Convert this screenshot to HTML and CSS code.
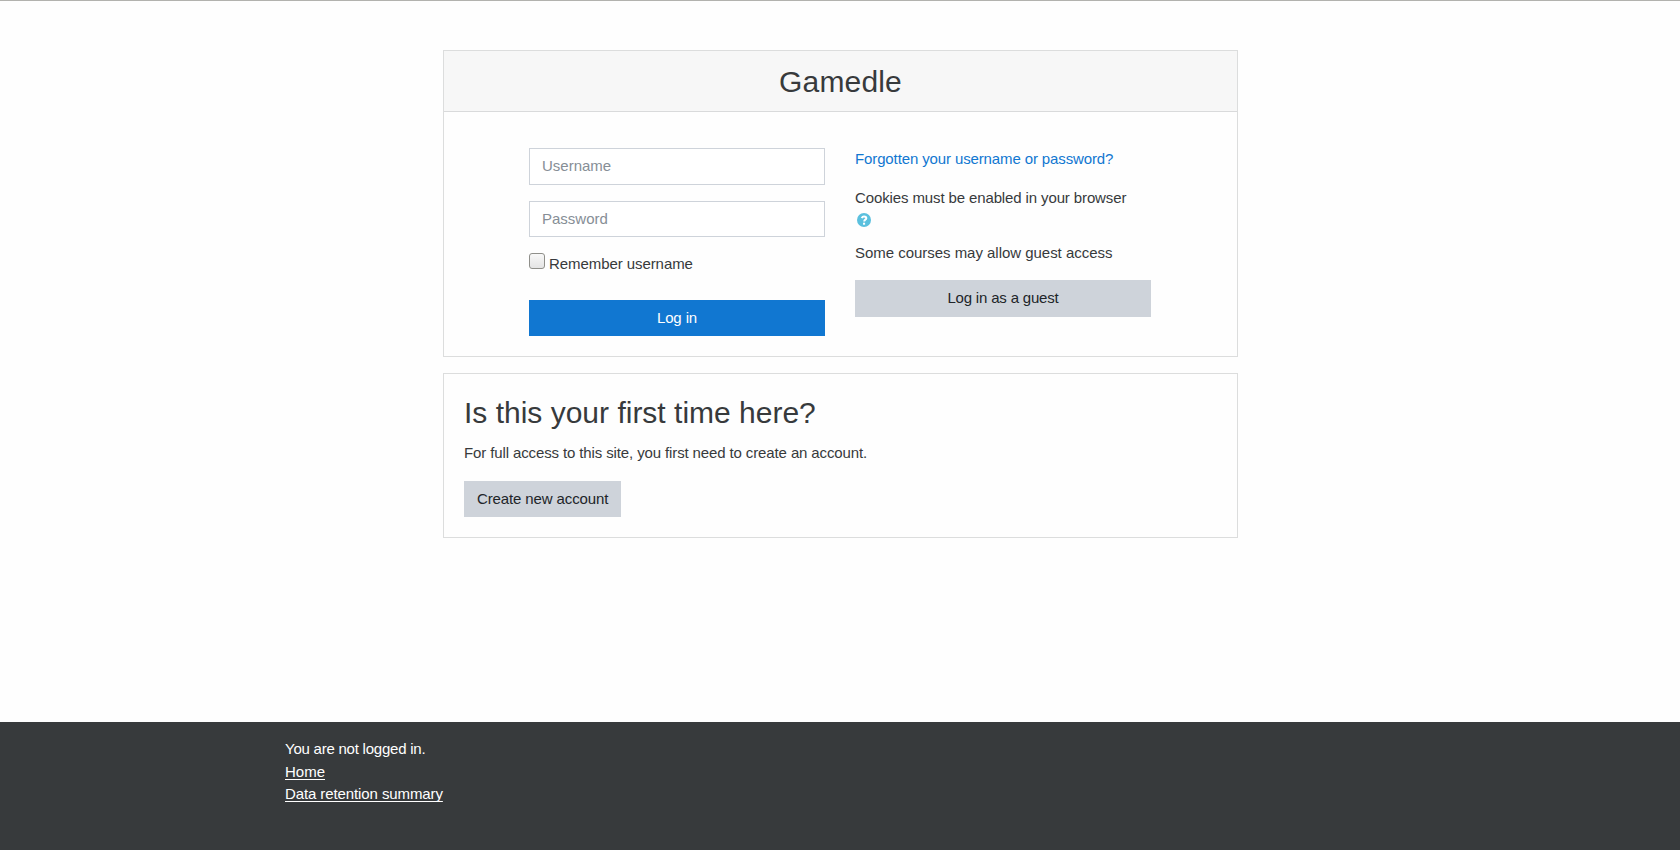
FILE: index.html
```html
<!DOCTYPE html>
<html lang="en">
<head>
<meta charset="utf-8">
<title>Gamedle: Log in to the site</title>
<link rel="stylesheet" href="styles.css">
</head>
<body>
<main class="page">
  <section class="card">
    <h2 class="card-header">Gamedle</h2>
    <div class="login">
      <form class="column">
        <input class="field username" type="text" placeholder="Username">
        <input class="field" type="password" placeholder="Password">
        <label class="remember"><input class="check" type="checkbox"><span>Remember username</span></label>
        <button class="btn primary" type="button">Log in</button>
      </form>
      <div class="column">
        <a class="forgot" href="#">Forgotten your username or password?</a>
        <div class="cookies">Cookies must be enabled in your browser
          <a class="help" href="#" aria-label="Help with cookies"><svg viewBox="0 0 14 14" width="14" height="14"><circle cx="7" cy="7" r="7" fill="#5bc0de"/><path d="M4.700 5.100C5.200 4.100 6 3.600 7 3.600c1.300 0 2.300.7 2.300 1.700 0 1.500-2.100 1.300-2.100 3.100" fill="none" stroke="#fff" stroke-width="2"/><path d="M6 9.700h2.100v2H6z" fill="#fff"/></svg></a>
        </div>
        <p class="guest-note">Some courses may allow guest access</p>
        <button class="btn secondary guest" type="button">Log in as a guest</button>
      </div>
    </div>
  </section>
  <section class="card signup">
    <h2 class="signup-title">Is this your first time here?</h2>
    <p class="signup-text">For full access to this site, you first need to create an account.</p>
    <button class="btn secondary" type="button">Create new account</button>
  </section>
</main>
<footer class="footer">
  <div class="footer-inner">
    <div class="status">You are not logged in.</div>
    <div><a href="#">Home</a></div>
    <div><a class="retention" href="#">Data retention summary</a></div>
  </div>
</footer>
</body>
</html>
```
FILE: styles.css
```css
* { box-sizing: border-box; }

body {
  margin: 0;
  height: 850px;
  overflow: hidden;
  display: flex;
  flex-direction: column;
  border-top: 1px solid #b2b2ae;
  background: #fefefe;
  color: #373a3c;
  font: 15px/22.5px "Liberation Sans", Arial, sans-serif;
}

h2, p { margin: 0; }
h2 { font-size: 30px; font-weight: 400; line-height: 36px; }

.page {
  flex: none;
  height: 721px;
  width: 795px;
  margin-left: 443px;
  padding-top: 49px;
}

.card { border: 1px solid #dcdddd; background: #fefefe; }

.card-header {
  padding: 13px 20px 11px;
  text-align: center;
  letter-spacing: 0.15px;
  background: #f7f7f7;
  border-bottom: 1px solid #d9dadb;
}

.login {
  display: flex;
  gap: 30px;
  padding: 36px 85px 20px;
}

.column { width: 296px; display: flex; flex-direction: column; }

.field {
  width: 100%;
  height: 36.5px;
  margin: 0 0 16px;
  padding: 6px 12px;
  border: 1px solid #ced3da;
  border-radius: 0;
  background: #fff;
  font: inherit;
}
.field::placeholder { color: #868e96; opacity: 1; }
.username { padding: 5px 12px 7px; }

.remember { display: flex; gap: 4px; margin-bottom: 24px; letter-spacing: -0.07px; }

.check {
  appearance: none;
  width: 16px;
  height: 16px;
  margin: 0;
  border: 1px solid #8f8f8a;
  border-radius: 3px;
  background: linear-gradient(#f8f8f8, #e4e4e4);
}

.btn {
  height: 36.5px;
  padding: 6px 12px;
  border: 1px solid transparent;
  font: inherit;
  letter-spacing: -0.12px;
}
.primary { background: #1177d1; border-color: #1177d1; color: #fff; }
.secondary { background: #ced3da; border-color: #ced3da; color: #212529; }
.guest { letter-spacing: -0.18px; }

.forgot { color: #1177d1; text-decoration: none; margin-bottom: 16px; letter-spacing: -0.12px; }
.cookies { height: 45px; margin-bottom: 10.5px; letter-spacing: -0.12px; }
.help { display: block; width: 16px; height: 22px; padding: 4px 0 0 2px; }
.help svg { display: block; }
.guest-note { margin-bottom: 15.5px; letter-spacing: -0.03px; }

.signup { margin-top: 16px; padding: 21px 20px 20px; }
.signup-title { margin-bottom: 10.5px; }
.signup-text { margin-bottom: 16.5px; letter-spacing: -0.12px; }

.footer { flex: 1; background: #373a3c; color: #fff; }
.footer-inner { margin-left: 285px; padding-top: 16px; }
.status { letter-spacing: -0.23px; }
.footer a {
  color: #fff;
  text-decoration: underline 1px;
  text-underline-offset: 2px;
  text-decoration-skip-ink: none;
}
.retention { letter-spacing: -0.1px; }
```
